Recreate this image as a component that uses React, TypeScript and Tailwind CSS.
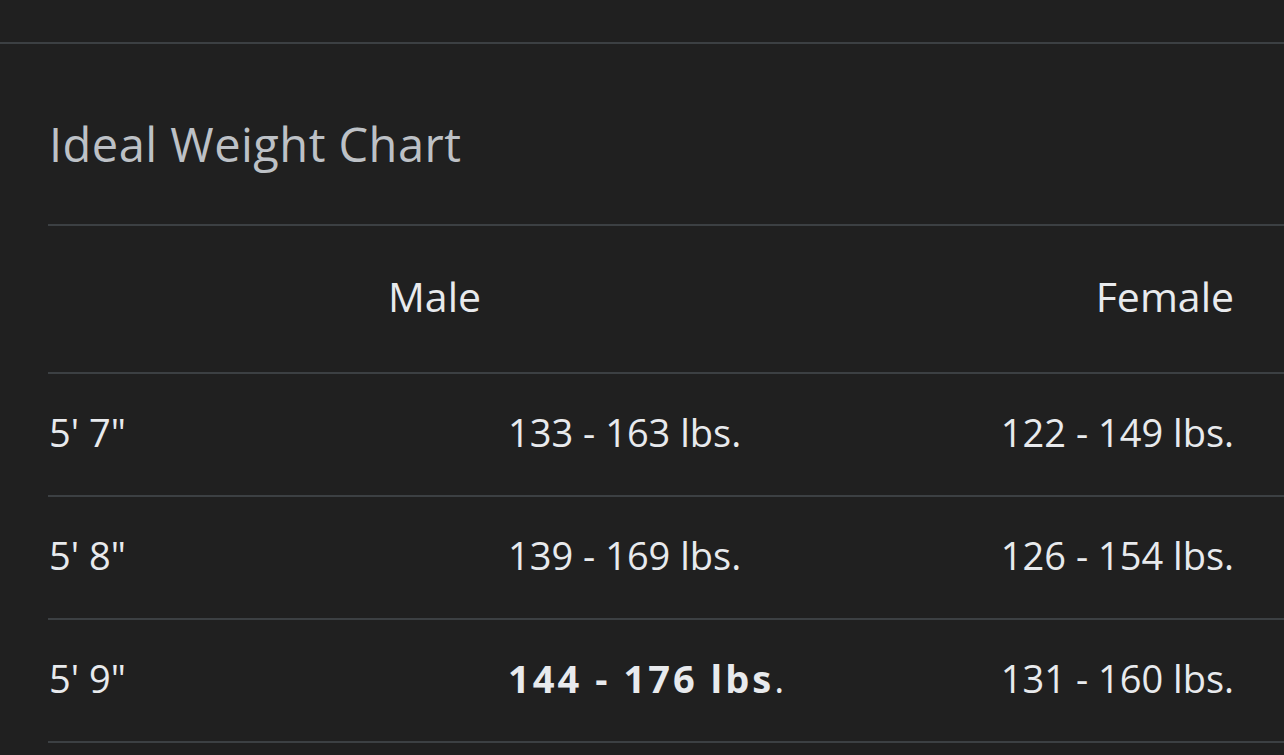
const rows = [
  { height: `5' 7"`, male: "133 - 163 lbs.", female: "122 - 149 lbs." },
  { height: `5' 8"`, male: "139 - 169 lbs.", female: "126 - 154 lbs." },
  { height: `5' 9"`, male: "144 - 176 lbs", female: "131 - 160 lbs.", bold: true },
];

export default function App() {
  return (
    <div
      className="min-h-[755px] w-full overflow-hidden bg-[#202020] text-[#e8eaed]"
      style={{ fontFamily: '"Open Sans", Roboto, sans-serif' }}
    >
      <div className="h-[42px]" />
      <div className="border-t-2 border-[#3c4043] pl-12">
        <h2 className="pt-[72px] pb-[52px] pl-px text-[47px] leading-[56px] tracking-[0.01em] text-[#bdc1c6]">
          Ideal Weight Chart
        </h2>
        <div className="border-t-2 border-[#3c4043]">
          <div className="flex h-[146px] items-center pr-[50px] pb-1 text-[41px] font-medium">
            <div className="w-[433px] text-right">Male</div>
            <div className="flex-1 text-right">Female</div>
          </div>
          {rows.map((row) => (
            <div
              key={row.height}
              className="grid h-[123px] grid-cols-[460px_1fr_auto] items-center border-t-2 border-[#3c4043] pr-[50px] pb-[6px] text-[38px] leading-[44px]"
            >
              <div className="pl-px">{row.height}</div>
              <div>
                {row.bold ? (
                  <>
                    <b className="font-bold tracking-[0.08em]">{row.male}</b>.
                  </>
                ) : (
                  row.male
                )}
              </div>
              <div className="text-right">{row.female}</div>
            </div>
          ))}
          <div className="border-t-2 border-[#3c4043]" />
        </div>
      </div>
    </div>
  );
}
